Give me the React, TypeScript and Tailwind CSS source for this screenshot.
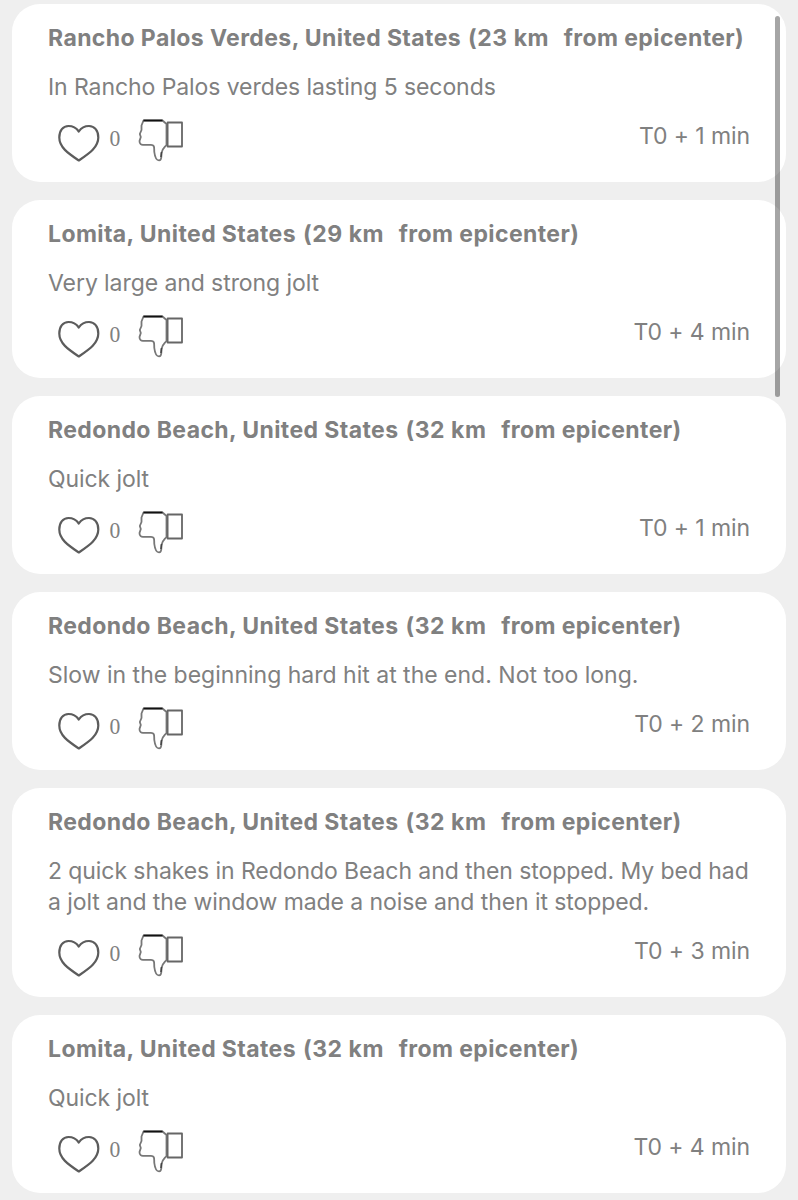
type Report = { city: string; km: number; lines: string[]; time: number; spaced?: boolean };

const reports: Report[] = [
  { city: "Rancho Palos Verdes", km: 23, lines: ["In Rancho Palos verdes lasting 5 seconds"], time: 1 },
  { city: "Lomita", km: 29, lines: ["Very large and strong jolt"], time: 4 },
  { city: "Redondo Beach", km: 32, lines: ["Quick jolt"], time: 1 },
  { city: "Redondo Beach", km: 32, lines: ["Slow in the beginning hard hit at the end. Not too long."], time: 2, spaced: true },
  {
    city: "Redondo Beach",
    km: 32,
    lines: [
      "2 quick shakes in Redondo Beach and then stopped. My bed had",
      "a jolt and the window made a noise and then it stopped.",
    ],
    time: 3,
  },
  { city: "Lomita", km: 32, lines: ["Quick jolt"], time: 4 },
];

function Heart() {
  return (
    <svg className="ml-2 mt-[19px] block h-10 w-11" viewBox="0 0 44 40" fill="none" stroke="#5c5c5c" strokeWidth="2.2" strokeLinejoin="round">
      <path d="M22.800 9.500C20 5.500 16 4 12.500 4C7 4 3.300 8.500 3.300 15.500C3.300 25.500 12.500 31.500 22.800 38.500C33 31.500 42.300 25.500 42.300 15.500C42.300 8.500 38.500 4 33 4C29.500 4 25.500 5.500 22.800 9.500Z" />
    </svg>
  );
}

function ThumbDown() {
  return (
    <svg className="ml-[17px] mt-[14px] block h-[46px] w-[48px]" viewBox="0 0 48 46" fill="none" strokeLinejoin="round">
      <path d="M6.500 3.500L4.500 8.500V13L2.800 17L3.800 20L2.500 24C2.500 27 4 28.200 7 27.800H14C18 28 17 31 17.300 35C17.800 39 19.500 43.400 22 43.400C25 43.400 24.300 39 24.500 36C25 32 27.500 30.500 29.500 28V7L25.500 3.500Z" stroke="#777" strokeWidth="1.800" />
      <path d="M6.500 3.500H25.500" stroke="#111" strokeWidth="1.800" />
      <path d="M30.600 5.500H45V29.500H30.600Z" stroke="#666" strokeWidth="1.800" />
      <path d="M24.600 35L24 40" stroke="#444" strokeWidth="1.600" />
    </svg>
  );
}

function Card({ report }: { report: Report }) {
  return (
    <article className="rounded-[28px] bg-white pr-[36px] pb-[11.500px] pl-[36px] pt-[19px]">
      <h2 className="h-[31px] whitespace-pre text-[23px] leading-[31px] font-bold tracking-[0.400px]">
        {`${report.city}, United States`}
        <span className="ml-[1px] tracking-[0.540px]">{` (${report.km} km`}</span>
        <span className="ml-[3px]">{"  from epicenter)"}</span>
      </h2>
      <div className={`mt-[18px] text-[23px] leading-[31px] ${report.spaced ? "tracking-[0px]" : "tracking-[-0.080px]"}`}>
        {report.lines.map((line) => (
          <p key={line} className="whitespace-pre">{line}</p>
        ))}
      </div>
      <footer className="flex h-[67px] items-start">
        <Heart />
        <span className="ml-[9px] mt-[20px] w-[11px] origin-center scale-x-90 font-['Liberation_Serif',serif] text-[24px] leading-[30px]">0</span>
        <ThumbDown />
        <span className="mt-[18px] ml-auto text-[23px] leading-[31px] tracking-[-0.080px]">T0 + {report.time} min</span>
      </footer>
    </article>
  );
}

export default function App() {
  return (
    <main className="relative h-[1200px] overflow-hidden bg-[#efefef] font-[Inter,sans-serif] text-[#808080]">
      <div className="flex flex-col gap-[18.500px] pt-[4px] pr-[12px] pl-[12px]">
        {reports.map((report, index) => (
          <Card key={index} report={report} />
        ))}
      </div>
      <div className="absolute top-[16px] right-[18px] h-[381px] w-[5px] rounded-full bg-black/35" />
    </main>
  );
}
